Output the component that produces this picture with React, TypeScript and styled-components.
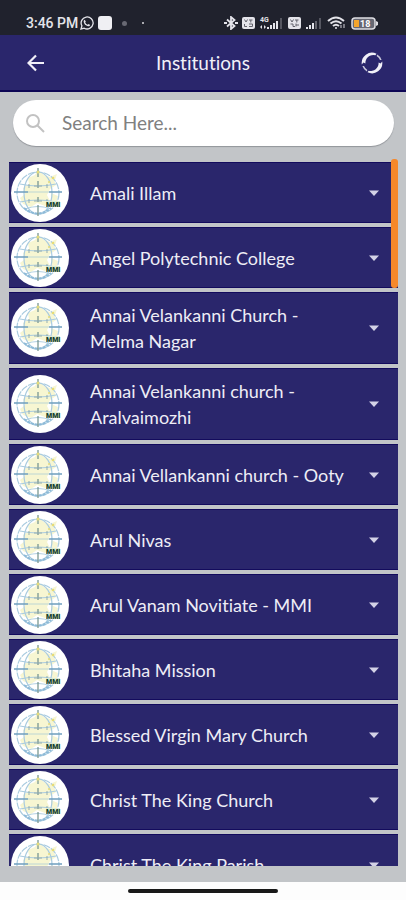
import React, { useState } from "react";
import styled, { createGlobalStyle } from "styled-components";

const GlobalStyle = createGlobalStyle`
  *, *::before, *::after { box-sizing: border-box; }
  body { margin: 0; background: #fdfdfd; font-family: Lato, "Open Sans", sans-serif; font-variant-ligatures: none; }
`;

const Screen = styled.div`
  display: flex;
  flex-direction: column;
  height: 100vh;
  background: #c2c5c8;
`;

const StatusBar = styled.div`
  display: flex;
  flex: none;
  align-items: flex-end;
  justify-content: space-between;
  height: 35px;
  padding: 0 27px 4px 26px;
  background: #20222d;
  color: #e4e4ea;
`;

const StatusGroup = styled.div<{ $gap: number }>`
  display: flex;
  align-items: center;
  gap: ${({ $gap }) => $gap}px;
  height: 16px;
`;

const Clock = styled.time`
  font: 500 14px/16px Roboto, sans-serif;
  white-space: nowrap;
`;

const Notice = styled.span`
  width: 14px;
  height: 14px;
  margin-left: 2px;
  border-radius: 3px;
  background: #efeff3;
`;

const Dot = styled.span<{ $size: number; $color: string; $gap: number }>`
  width: ${({ $size }) => $size}px;
  height: ${({ $size }) => $size}px;
  margin-left: ${({ $gap }) => $gap}px;
  border-radius: 50%;
  background: ${({ $color }) => $color};
`;

const Header = styled.header`
  display: grid;
  flex: none;
  grid-template-columns: 72px 1fr 68px;
  align-items: center;
  height: 57px;
  border-bottom: 2px solid #0d0655;
  background: #2a266c;
  color: #f1f0f8;
`;

const Title = styled.h1`
  margin: 0;
  padding-right: 4px;
  font-size: 19px;
  font-weight: 400;
  line-height: 26px;
  text-align: center;
`;

const IconButton = styled.button`
  display: grid;
  place-items: center;
  justify-self: center;
  width: 40px;
  height: 40px;
  padding: 0;
  border: 0;
  background: none;
  color: inherit;
`;

const SearchField = styled.label`
  display: flex;
  flex: none;
  align-items: center;
  gap: 17px;
  height: 46px;
  margin: 8px 12px 16px 13px;
  padding: 0 20px 0 12px;
  border-radius: 23px;
  background: #fff;
  box-shadow: 0 1px 1px #92959a;
`;

const SearchInput = styled.input`
  flex: 1;
  min-width: 0;
  padding: 0;
  border: 0;
  outline: 0;
  background: none;
  color: #555;
  font: 400 19px/26px Lato, sans-serif;
  &::placeholder { color: #808080; opacity: 1; }
`;

const ListArea = styled.main`
  position: relative;
  flex: 1;
  min-height: 0;
  margin: 0 8px 16px 9px;
`;

const List = styled.ul`
  display: flex;
  flex-direction: column;
  gap: 4px;
  height: 100%;
  margin: 0;
  padding: 0;
  overflow-y: auto;
  scrollbar-width: none;
  list-style: none;
`;

const ScrollThumb = styled.div`
  position: absolute;
  top: -3px;
  right: 0;
  width: 7px;
  height: 129px;
  border-radius: 3px;
  background: #f6882a;
`;

const Row = styled.button`
  display: grid;
  grid-template-columns: 58px 1fr 16px;
  column-gap: 15px;
  align-items: center;
  width: 100%;
  min-height: 61px;
  padding: 0 16px 0 2px;
  border: 1px solid #130b5d;
  border-width: 1px 0;
  background: #2a266c;
  color: #eeedf6;
  font: 400 18px/26px Lato, sans-serif;
  font-variant-ligatures: none;
  text-align: left;
`;

const RowName = styled.span`
  padding: 9px 0 9px 6px;
`;

const Badge = styled.svg`
  display: block;
  width: 58px;
  height: 58px;
`;

const HomeBar = styled.footer`
  display: flex;
  flex: none;
  align-items: center;
  justify-content: center;
  height: 18px;
  background: #fdfdfd;
`;

const HomeLine = styled.div`
  width: 37%;
  height: 4px;
  border-radius: 2px;
  background: #181818;
`;

const institutions = [
  "Amali Illam",
  "Angel Polytechnic College",
  "Annai Velankanni Church - Melma Nagar",
  "Annai Velankanni church - Aralvaimozhi",
  "Annai Vellankanni church - Ooty",
  "Arul Nivas",
  "Arul Vanam Novitiate - MMI",
  "Bhitaha Mission",
  "Blessed Virgin Mary Church",
  "Christ The King Church",
  "Christ The King Parish",
];

function GlobeBadge() {
  return (
    <Badge viewBox="0 0 58 58" aria-hidden="true">
      <circle cx="29" cy="29" r="29" fill="#fff" />
      <g fill="#f7f6d2">
        <path d="M27 6 33 11 42 14 45 21 39 25 36 31 39 37 34 42 26 39 20 43 12 40 9 34 14 30 12 24 18 20 17 14 24 11Z" />
        <path d="M41 12 46 10 44 16ZM40 29 47 32 45 39 40 36Z" />
      </g>
      <g fill="none" stroke="#a9cbdf" strokeWidth="1.2">
        <circle cx="27" cy="29" r="21" strokeDasharray="7 1" />
        <ellipse cx="27" cy="29" rx="14" ry="21" />
        <path d="M9 20Q27 24 45 20M9 38Q27 34 45 38M14 45Q27 40 40 45" />
      </g>
      <path d="M13 44Q27 55 40 44" fill="none" stroke="#8dbad8" strokeWidth="2" strokeDasharray="3 1" />
      <path d="M3 28H17M38 28H51" stroke="#6f9fbe" strokeWidth="1.6" />
      <path d="M17 28H38" stroke="#bcd6d4" strokeWidth="1" />
      <path d="M27 4V13M27 17V24M27 33V38M27 41V52" stroke="#7a9792" strokeWidth="1.3" />
      <path d="M18 20V24M36 20V24M18 35V39M36 35V38M23 22H31M23 37H31" stroke="#93adb1" />
      <g fill="#e6dc79">
        <circle cx="27" cy="8" r="1.5" />
        <circle cx="42" cy="14" r="1.3" />
        <circle cx="38" cy="18" r="1" />
      </g>
      <path d="M35 37H49V43H35Z" fill="#dcebd4" />
      <text x="35" y="43" fill="#173f2b" fontFamily="Roboto, sans-serif" fontSize="7" fontWeight="900">MMI</text>
    </Badge>
  );
}

function Caret() {
  return (
    <svg width="16" height="10" viewBox="0 0 16 10" aria-hidden="true">
      <path d="M3 2.5H13L8 8Z" fill="#d3d2e6" />
    </svg>
  );
}

function WhatsAppIcon() {
  return (
    <svg width="14" height="14" viewBox="0 0 14 14" fill="none" aria-hidden="true">
      <path d="M1 13 1.9 9.9A6 6 0 1 1 4.2 12.2Z" stroke="currentColor" strokeWidth="1.3" />
      <path d="M4.7 3.8 5.8 5.5 5.2 6.4Q6 8 7.7 8.8L8.6 8 10.2 9Q9.6 10.6 8 10.3 4.3 9.3 3.6 5.8 3.6 4.3 4.7 3.8Z" fill="currentColor" />
    </svg>
  );
}

function BluetoothIcon() {
  return (
    <svg width="14" height="14" viewBox="0 0 14 14" fill="none" stroke="currentColor" strokeWidth="1.8" aria-hidden="true">
      <path d="M3 3.5 10.5 10 7 13V1L10.5 4 3 10.5" />
      <path d="M0 7H3M11 7H14" strokeWidth="2" />
    </svg>
  );
}

function VolteIcon({ sim }: { sim: number }) {
  return (
    <svg width="13" height="12" viewBox="0 0 13 12" fill="none" aria-hidden="true">
      <rect width="13" height="12" rx="2" fill="currentColor" />
      <path d="M2.5 2.5 4 5 5.5 2.5M7 3H10.5M8.8 3V5.5" stroke="#62636c" />
      <path d={sim === 1 ? "M2.5 7V9.5H5M7 7H10.5V9.5H7" : "M2.5 7H5V9.5H7M8 6.5V9.5M8 8H11"} stroke="#62636c" />
    </svg>
  );
}

function SignalIcon({ network }: { network?: boolean }) {
  return (
    <svg width={network ? 25 : 18} height="14" viewBox={network ? "0 0 25 14" : "7 0 18 14"} aria-hidden="true">
      {network && (
        <>
          <text x="1" y="6" fill="currentColor" fontFamily="Roboto, sans-serif" fontSize="7" fontWeight="700">4G</text>
          <path d="M1 11 3 9V13ZM5 9 7 11 5 13Z" fill="currentColor" />
        </>
      )}
      <path d="M8 11H10V13H8ZM11 9H13V13H11ZM14 7H16V13H14Z" fill="currentColor" />
      <path d="M17 5H19V13H17Z" fill={network ? "currentColor" : "#64656e"} />
      <path d="M21 2H23V13H21Z" fill="#555660" />
    </svg>
  );
}

function WifiIcon() {
  return (
    <svg width="20" height="14" viewBox="0 0 20 14" fill="none" stroke="currentColor" strokeWidth="2" aria-hidden="true">
      <path d="M1 5Q9 -2 17 5M3.5 7.5Q9 3 14.5 7.5M6 10Q9 7.5 12 10" />
      <circle cx="9" cy="12" r="1" fill="currentColor" stroke="none" />
      <path d="M14 12V9M17 8V12" strokeWidth="1.3" stroke="#a9a9b1" />
    </svg>
  );
}

function BatteryIcon() {
  return (
    <svg width="28" height="13" viewBox="0 0 28 13" aria-hidden="true">
      <rect x="1" y="1" width="23" height="11" rx="3" fill="#676873" stroke="#dedee3" strokeWidth="1.5" />
      <path d="M3 3H8V10H3Z" fill="#f4a52c" />
      <path d="M25 4 27 5V8L25 9Z" fill="#dedee3" />
      <text x="9" y="10" fill="#fff" fontFamily="Roboto, sans-serif" fontSize="9" fontWeight="700">18</text>
    </svg>
  );
}

export default function App() {
  const [query, setQuery] = useState("");
  const shown = institutions.filter((name) => name.toLowerCase().includes(query.toLowerCase()));

  return (
    <>
      <GlobalStyle />
      <Screen>
        <StatusBar>
          <StatusGroup $gap={2}>
            <Clock>3:46 PM</Clock>
            <WhatsAppIcon />
            <Notice />
            <Dot $size={5} $color="#686973" $gap={8} />
            <Dot $size={2} $color="#d9d9dd" $gap={13} />
          </StatusGroup>
          <StatusGroup $gap={4}>
            <BluetoothIcon />
            <VolteIcon sim={1} />
            <SignalIcon network />
            <VolteIcon sim={2} />
            <SignalIcon />
            <WifiIcon />
            <BatteryIcon />
          </StatusGroup>
        </StatusBar>
        <Header>
          <IconButton type="button" aria-label="Back">
            <svg width="18" height="18" viewBox="0 0 18 18" fill="none" stroke="currentColor" strokeWidth="2.2" aria-hidden="true">
              <path d="M17 9H2M9 1.5 1.5 9 9 16.5" />
            </svg>
          </IconButton>
          <Title>Institutions</Title>
          <IconButton type="button" aria-label="Refresh">
            <svg width="22" height="22" viewBox="0 0 22 22" fill="currentColor" aria-hidden="true">
              <path d="M.8 12.5A10.3 10.3 0 0 1 15.5 1.7L14.4 3.3A8 8 0 0 0 4.4 11.5L2.4 10.4Z" />
              <path d="M21.2 9.5A10.3 10.3 0 0 1 6.5 20.3L7.6 18.7A8 8 0 0 0 17.6 10.5L19.6 11.6Z" />
              <path d="M16.3 2.6A10 10 0 0 1 20.6 8L19 8A8.5 8.5 0 0 0 15.6 4ZM5.7 19.4A10 10 0 0 1 1.4 14L3 14A8.5 8.5 0 0 0 6.4 18Z" fillOpacity=".8" />
            </svg>
          </IconButton>
        </Header>
        <SearchField>
          <svg width="20" height="20" viewBox="0 0 20 20" fill="none" stroke="#c2c2c2" strokeWidth="2" aria-hidden="true">
            <circle cx="8" cy="8" r="6" />
            <path d="M12.5 12.5 19 19" />
          </svg>
          <SearchInput
            aria-label="Search institutions"
            placeholder="Search Here..."
            value={query}
            onChange={(event) => setQuery(event.target.value)}
          />
        </SearchField>
        <ListArea>
          <List>
            {shown.map((name) => (
              <li key={name}>
                <Row type="button" aria-expanded={false}>
                  <GlobeBadge />
                  <RowName>{name}</RowName>
                  <Caret />
                </Row>
              </li>
            ))}
          </List>
          <ScrollThumb />
        </ListArea>
        <HomeBar>
          <HomeLine />
        </HomeBar>
      </Screen>
    </>
  );
}
